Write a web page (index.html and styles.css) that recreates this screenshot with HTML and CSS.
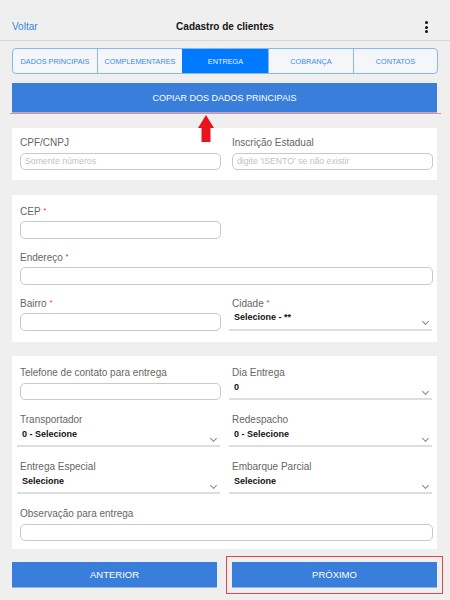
FILE: index.html
```html
<!DOCTYPE html>
<html lang="pt-BR">
<head>
<meta charset="utf-8">
<title>Cadastro de clientes</title>
<link rel="stylesheet" href="styles.css">
</head>
<body>
<header class="topbar">
  <a class="back">Voltar</a>
  <h1 class="title">Cadastro de clientes</h1>
  <span class="kebab"><i></i><i></i><i></i></span>
</header>

<nav class="tabs">
  <span class="tab">DADOS PRINCIPAIS</span>
  <span class="tab">COMPLEMENTARES</span>
  <span class="tab active">ENTREGA</span>
  <span class="tab">COBRANÇA</span>
  <span class="tab">CONTATOS</span>
</nav>

<div class="copy-wrap">
  <button class="btn copy">COPIAR DOS DADOS PRINCIPAIS</button>
  <svg class="arrow" width="16" height="27" viewBox="0 0 16 27"><polygon points="8,0 16,13 12.5,13 12.5,27 3.5,27 3.5,13 0,13" fill="#e8141e"/></svg>
</div>

<section class="card c1">
  <div class="grid">
    <div class="field"><label>CPF/CNPJ</label><div class="input ph">Somente números</div></div>
    <div class="field"><label>Inscrição Estadual</label><div class="input ph">digite 'ISENTO' se não existir</div></div>
  </div>
</section>

<section class="card c2">
  <div class="grid">
    <div class="field"><label>CEP <b class="req">*</b></label><div class="input"></div></div>
    <div></div>
    <div class="field full"><label>Endereço <b class="req">*</b></label><div class="input"></div></div>
    <div class="field"><label>Bairro <b class="req">*</b></label><div class="input"></div></div>
    <div class="field"><label>Cidade <b class="req">*</b></label><div class="select">Selecione - **<span class="chev"></span></div></div>
  </div>
</section>

<section class="card c3">
  <div class="grid">
    <div class="field"><label>Telefone de contato para entrega</label><div class="input"></div></div>
    <div class="field"><label>Dia Entrega</label><div class="select">0<span class="chev"></span></div></div>
    <div class="field"><label>Transportador</label><div class="select">0 - Selecione<span class="chev"></span></div></div>
    <div class="field"><label>Redespacho</label><div class="select">0 - Selecione<span class="chev"></span></div></div>
    <div class="field"><label>Entrega Especial</label><div class="select">Selecione<span class="chev"></span></div></div>
    <div class="field"><label>Embarque Parcial</label><div class="select">Selecione<span class="chev"></span></div></div>
    <div class="field full"><label>Observação para entrega</label><div class="input"></div></div>
  </div>
</section>

<footer class="actions">
  <button class="btn nav">ANTERIOR</button>
  <button class="btn nav next">PRÓXIMO</button>
</footer>
</body>
</html>
```

FILE: styles.css
```css
* { box-sizing: border-box; }
html, body { margin: 0; padding: 0; }
body {
  background: #efefef;
  font-family: "Liberation Sans", Arial, sans-serif;
  width: 450px;
  height: 600px;
  overflow: hidden;
}

.topbar {
  height: 41px;
  padding: 13px 12px 0 12px;
  border-bottom: 1px solid #d7d7d7;
  display: flex;
  align-items: center;
  justify-content: space-between;
  position: relative;
}
.back {
  color: #2f86e6;
  font-size: 10px;
  line-height: 27px;
  width: 60px;
}
.title {
  margin: 0;
  font-size: 10px;
  font-weight: bold;
  color: #151515;
  line-height: 27px;
}
.kebab {
  width: 60px;
  display: flex;
  flex-direction: column;
  align-items: flex-end;
  gap: 1.6px;
  padding-right: 10px;
  padding-top: 1px;
}
.kebab i {
  display: block;
  width: 3px;
  height: 3px;
  border-radius: 50%;
  background: #111;
}

.tabs {
  margin: 7px 12px 0 12px;
  height: 26px;
  display: grid;
  grid-template-columns: 84px 85px 86px 85px 1fr;
  border: 1px solid #86b8f2;
  border-radius: 4px;
  overflow: hidden;
  background: #f4f6f9;
}
.tab {
  display: flex;
  align-items: center;
  justify-content: center;
  font-size: 7.3px;
  color: #3b8de9;
  border-left: 1px solid #86b8f2;
}
.tab:first-child { border-left: none; }
.tab.active {
  background: #007aff;
  color: #eaf3ff;
  border-left-color: #007aff;
}

.copy-wrap {
  margin: 9px 9px 0 10px;
  padding: 0 4px 0 2px;
  border-bottom: 1.5px solid #f08a8a;
  position: relative;
}
.btn {
  display: block;
  border: none;
  margin: 0;
  font-family: "Liberation Sans", Arial, sans-serif;
  color: #fff;
  background: #3a7edb;
  cursor: pointer;
}
.copy {
  width: 100%;
  height: 30px;
  font-size: 9px;
  border-bottom: 1px solid #8fb6ea;
}
.arrow {
  position: absolute;
  left: 188px;
  top: 32px;
  z-index: 2;
}

.card {
  background: #fff;
  margin: 14px 13px 0 12px;
  padding: 9px 4px 10px 8px;
}
.c2 { margin-top: 15px; padding-top: 11px; padding-bottom: 11px; }
.c3 { margin-top: 14px; padding-top: 11px; padding-bottom: 8px; }

.grid {
  display: grid;
  grid-template-columns: 201px 201px;
  column-gap: 11px;
  row-gap: 13px;
}
.c3 .grid { row-gap: 14px; }
.full { grid-column: 1 / -1; }

.field label {
  display: block;
  height: 12px;
  font-size: 10px;
  line-height: 12px;
  color: #666;
  margin-bottom: 4px;
  white-space: nowrap;
}
.c2 .field label { margin-bottom: 3px; }
.req {
  color: #e8323c;
  font-weight: normal;
  font-size: 8px;
  line-height: 0;
  position: relative;
  top: -2px;
}
.input {
  height: 17px;
  border: 1px solid #c9c9c9;
  border-radius: 5px;
  background: #fff;
  font-size: 8.7px;
  line-height: 15px;
  padding-left: 4px;
  white-space: nowrap;
}
.input.ph { color: #c2c2c2; }
.c2 .input { height: 18px; }

.select {
  position: relative;
  margin-left: -3px;
  margin-right: 1px;
  height: 17px;
  border-bottom: 2px solid #dedede;
  font-size: 9px;
  font-weight: bold;
  color: #111;
  line-height: 8px;
  padding-left: 5px;
  white-space: nowrap;
}
.c2 .select { height: 18px; }
.chev {
  position: absolute;
  right: 4px;
  top: 6px;
  width: 5px;
  height: 5px;
  border-right: 1px solid #888;
  border-bottom: 1px solid #888;
  transform: rotate(45deg);
}

.actions {
  margin: 13px 13px 0 12px;
  display: grid;
  grid-template-columns: 205px 205px;
  column-gap: 15px;
}
.nav {
  height: 26px;
  font-size: 9.5px;
  border-bottom: 1px solid #8fb6ea;
}
.next {
  outline: 1px solid #e8434b;
  outline-offset: 5px;
}
```
